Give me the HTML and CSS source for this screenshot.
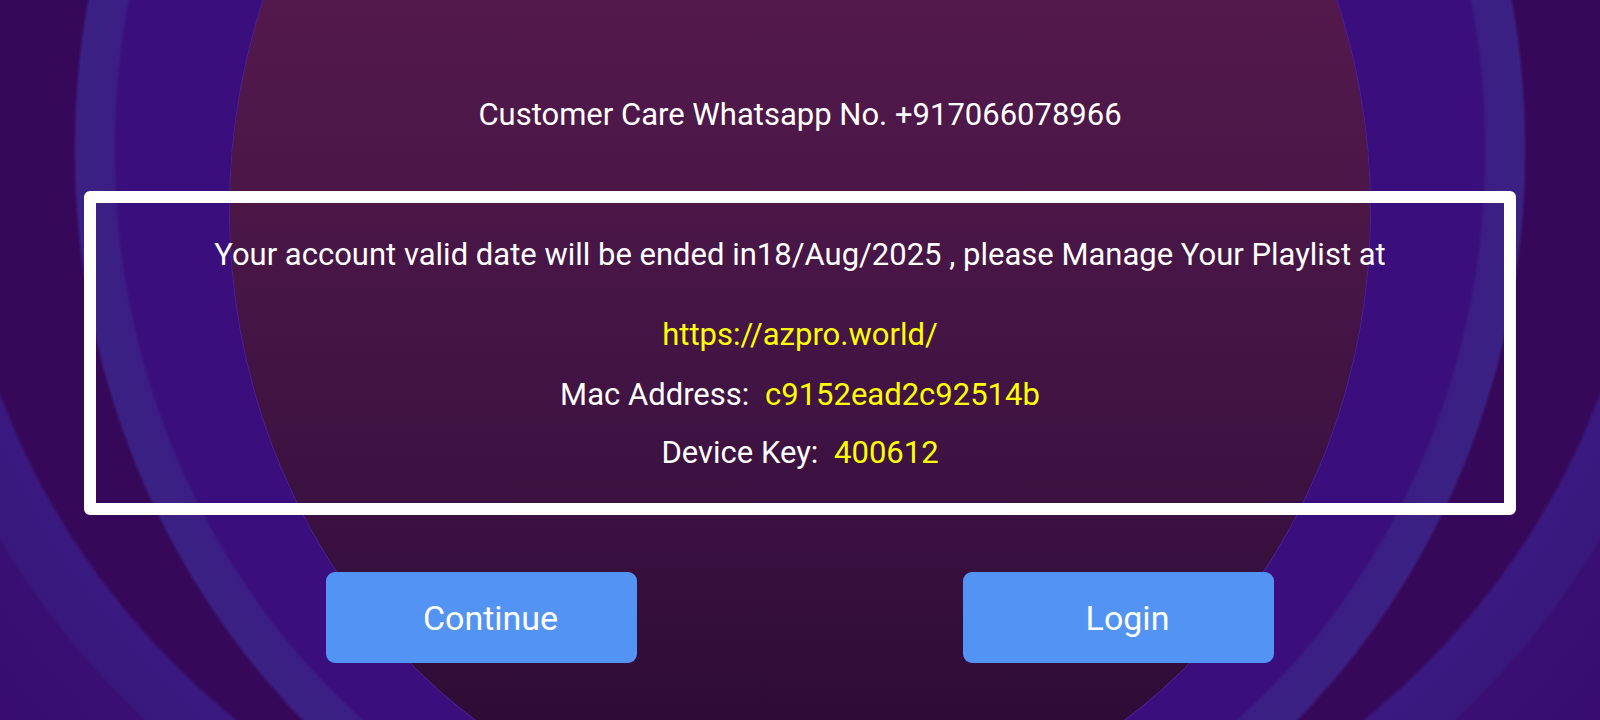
FILE: index.html
```html
<!DOCTYPE html>
<html lang="en">
<head>
    <meta charset="UTF-8">
    <meta name="viewport" content="width=device-width, initial-scale=1.0">
    <title>Account Info</title>
    <link rel="stylesheet" href="styles.css">
</head>
<body>
    <div class="screen">
        <p class="care">Customer Care Whatsapp No. +917066078966</p>

        <div class="info-box">
            <p class="notice">Your account valid date will be ended in18/Aug/2025 , please Manage Your Playlist at</p>
            <p class="link">https://azpro.world/</p>
            <p class="row">Mac Address: <span class="value">c9152ead2c92514b</span></p>
            <p class="row">Device Key: <span class="value">400612</span></p>
        </div>

        <div class="actions">
            <button class="btn">Continue</button>
            <button class="btn">Login</button>
        </div>
    </div>
</body>
</html>
```

FILE: styles.css
```css
body {
    margin: 0;
    padding: 0;
    font-family: Roboto, 'Noto Sans', sans-serif;
    color: #ffffff;
    background: #36085a;
}
.screen {
    position: relative;
    width: 1600px;
    height: 720px;
    overflow: hidden;
    text-align: center;
    /* inner violet band, then the outer band, on a dark base */
    background:
        radial-gradient(727px 785px at 800px 150px,
            #3b0e80 0%, #3a0e7c 94%,
            #3b1e83 94.5%, #3b2184 99.5%,
            transparent 100%),
        radial-gradient(846px 768px at 800px 150px,
            transparent 99.5%,
            #3a1a80 100%, #39187d 107%,
            #390f74 107.5%, #380c6e 126%,
            transparent 126.5%),
        #36085a;
}
/* the big maroon ellipse in the middle */
.screen::before {
    content: "";
    position: absolute;
    left: 230px;
    top: -410px;
    width: 1140px;
    height: 1240px;
    border-radius: 50%;
    background: linear-gradient(to bottom, #55194d 30%, #4a1747 50%, #3a1140 75%, #2e0b36 92%);
    box-shadow: 0 0 0 1px rgba(120, 80, 200, 0.3);
}
.screen > * {
    position: relative;
}
p {
    margin: 0;
}
.care {
    padding-top: 97px;
    font-size: 31px;
    line-height: 36px;
}
.info-box {
    margin: 58px 84px 0;
    padding: 34px 0 32px;
    border: 12px solid #ffffff;
    border-radius: 6px;
}
.notice {
    font-size: 31px;
    line-height: 36px;
}
.link {
    margin-top: 44px;
    font-size: 31px;
    line-height: 36px;
    color: #ffff00;
}
.row {
    margin-top: 24px;
    font-size: 31px;
    line-height: 36px;
}
.row + .row {
    margin-top: 22px;
}
.value {
    margin-left: 8px;
    color: #ffff00;
}
.actions {
    display: flex;
    justify-content: center;
    gap: 326px;
    margin-top: 57px;
}
.btn {
    width: 311px;
    height: 91px;
    padding: 0 0 0 18px;
    border: none;
    border-radius: 9px;
    background: #5393f3;
    color: #ffffff;
    font-family: Roboto, 'Noto Sans', sans-serif;
    font-size: 34px;
    cursor: pointer;
}
```
